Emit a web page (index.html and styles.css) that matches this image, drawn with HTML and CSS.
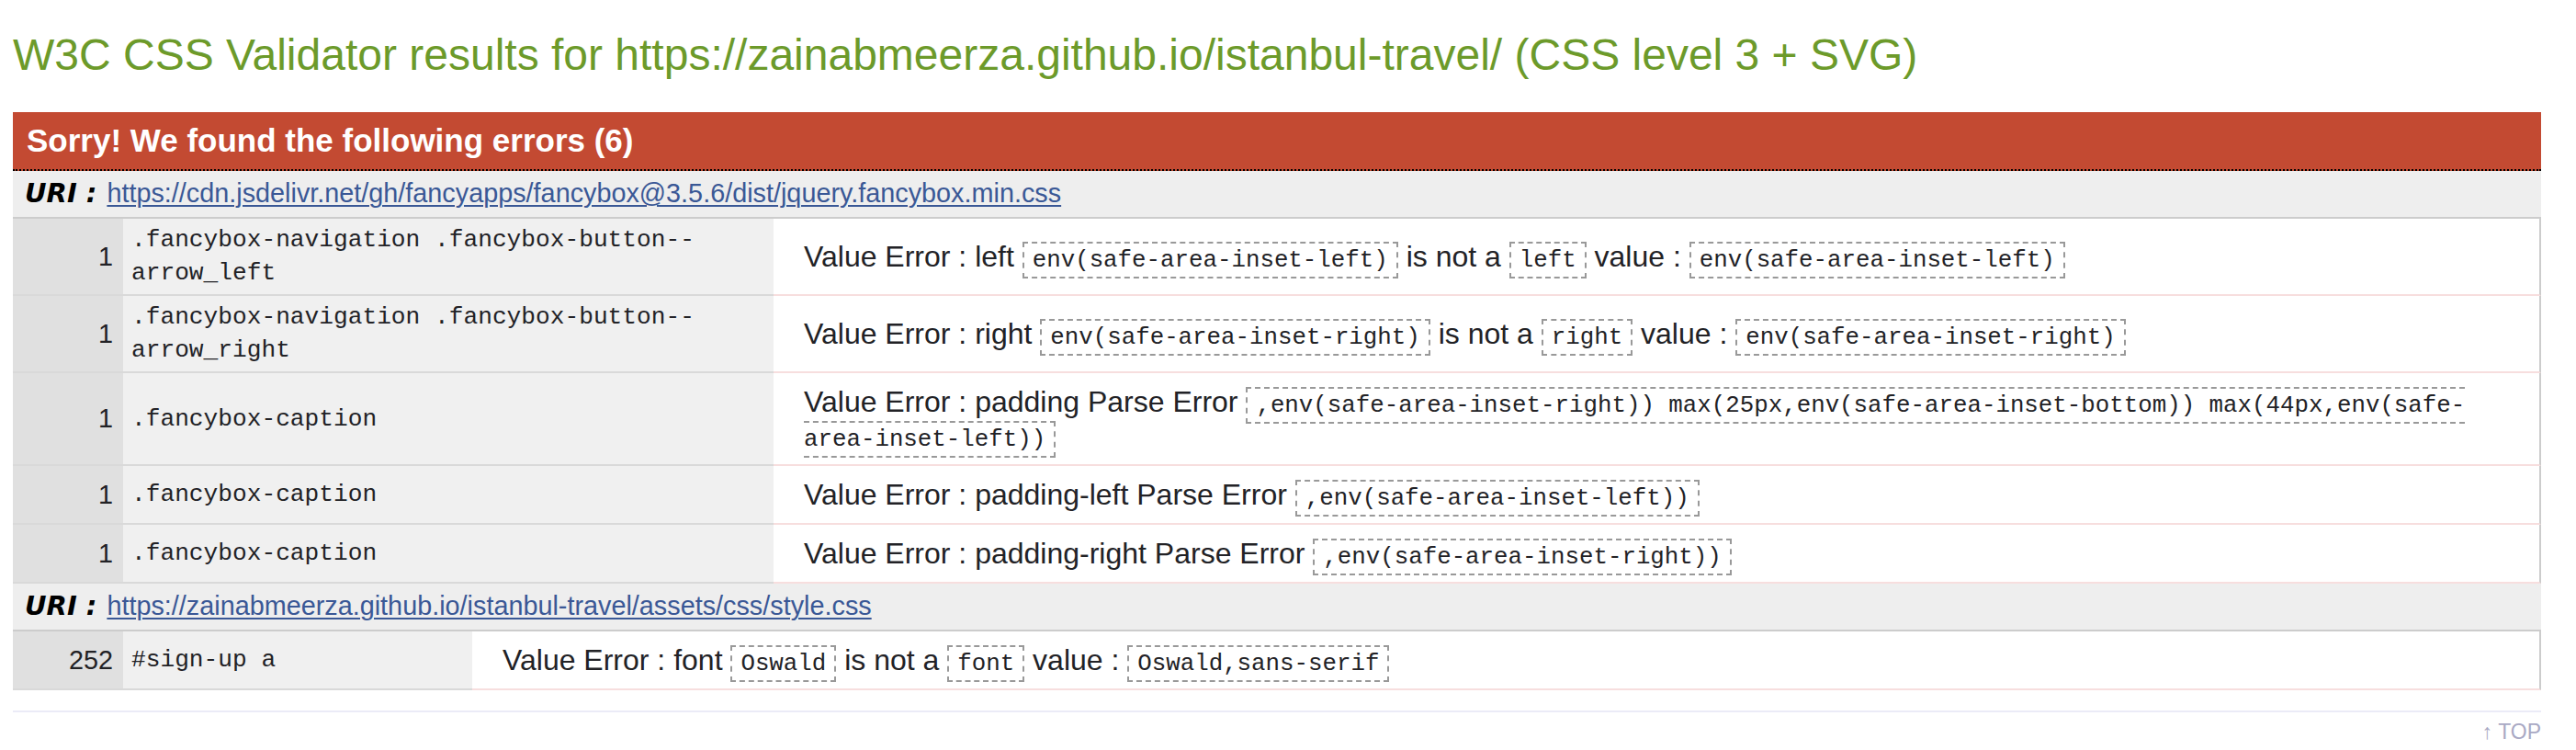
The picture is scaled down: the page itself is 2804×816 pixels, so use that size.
FILE: index.html
```html
<!DOCTYPE html>
<html lang="en">
<head>
<meta charset="utf-8">
<title>W3C CSS Validator results</title>
<link rel="stylesheet" href="styles.css">
</head>
<body>
<div class="page">
  <h2 class="title">W3C CSS Validator results for https://zainabmeerza.github.io/istanbul-travel/ (CSS level 3 + SVG)</h2>

  <div class="errors">
    <h3 class="errors-head">Sorry! We found the following errors (6)</h3>

    <div class="uri-bar"><span class="uri-label">URI :</span> <a class="uri-link" href="#">https://cdn.jsdelivr.net/gh/fancyapps/fancybox@3.5.6/dist/jquery.fancybox.min.css</a></div>
    <table class="err-table">
      <colgroup><col class="c-num"><col class="c-sel-wide"><col></colgroup>
      <tr>
        <td class="num">1</td>
        <td class="sel">.fancybox-navigation .fancybox-button--arrow_left</td>
        <td class="msg">Value Error : left <span class="code">env(safe-area-inset-left)</span> is not a <span class="code">left</span> value : <span class="code">env(safe-area-inset-left)</span></td>
      </tr>
      <tr>
        <td class="num">1</td>
        <td class="sel">.fancybox-navigation .fancybox-button--arrow_right</td>
        <td class="msg">Value Error : right <span class="code">env(safe-area-inset-right)</span> is not a <span class="code">right</span> value : <span class="code">env(safe-area-inset-right)</span></td>
      </tr>
      <tr>
        <td class="num">1</td>
        <td class="sel">.fancybox-caption</td>
        <td class="msg">Value Error : padding Parse Error <span class="code">,env(safe-area-inset-right)) max(25px,env(safe-area-inset-bottom)) max(44px,env(safe-area-inset-left))</span></td>
      </tr>
      <tr>
        <td class="num">1</td>
        <td class="sel">.fancybox-caption</td>
        <td class="msg">Value Error : padding-left Parse Error <span class="code">,env(safe-area-inset-left))</span></td>
      </tr>
      <tr>
        <td class="num">1</td>
        <td class="sel">.fancybox-caption</td>
        <td class="msg">Value Error : padding-right Parse Error <span class="code">,env(safe-area-inset-right))</span></td>
      </tr>
    </table>

    <div class="uri-bar"><span class="uri-label">URI :</span> <a class="uri-link" href="#">https://zainabmeerza.github.io/istanbul-travel/assets/css/style.css</a></div>
    <table class="err-table">
      <colgroup><col class="c-num"><col class="c-sel-narrow"><col></colgroup>
      <tr>
        <td class="num">252</td>
        <td class="sel">#sign-up a</td>
        <td class="msg">Value Error : font <span class="code">Oswald</span> is not a <span class="code">font</span> value : <span class="code">Oswald,sans-serif</span></td>
      </tr>
    </table>
  </div>

  <div class="footer-rule"></div>
  <div class="top-link">↑ TOP</div>
</div>
</body>
</html>
```

FILE: styles.css
```css
html, body {
  margin: 0;
  padding: 0;
  background: #ffffff;
}

.page {
  padding: 0 38px 0 14px;
  font-family: "Liberation Sans", Arial, sans-serif;
  color: #222226;
}

.title {
  margin: 33px 0 35px 0;
  font-size: 48px;
  line-height: 54px;
  font-weight: normal;
  color: #6c9a2a;
  white-space: nowrap;
}

.errors-head {
  margin: 0;
  padding: 11px 15px 12px 15px;
  background: #c34a32;
  color: #ffffff;
  font-size: 35px;
  line-height: 39px;
  font-weight: bold;
  border-bottom: 2px dotted #000000;
}

.uri-bar {
  background: #eeeeee;
  padding: 8px 13px 10px 13px;
  line-height: 32px;
  font-size: 28.8px;
  border-bottom: 2px solid #cccccc;
}

.uri-label {
  font-family: "DejaVu Sans", Verdana, sans-serif;
  font-weight: bold;
  font-style: italic;
  font-size: 29px;
  margin-right: 3px;
  color: #000000;
}

.uri-link {
  color: #3a5896;
  text-decoration: underline;
  text-decoration-thickness: 2px;
  text-underline-offset: 3px;
}

.err-table {
  width: 100%;
  table-layout: fixed;
  border-collapse: separate;
  border-spacing: 0;
}

.c-num { width: 120px; }
.c-sel-wide { width: 708px; }
.c-sel-narrow { width: 380px; }

.err-table td {
  vertical-align: middle;
  border-bottom: 2px solid #d9d9d9;
}

.num {
  background: #e0e0e0;
  text-align: right;
  padding: 0 11px 0 0;
  font-size: 28.8px;
}

.sel {
  background: #f0f0f0;
  font-family: "Liberation Mono", "Courier New", monospace;
  font-size: 26.2px;
  line-height: 36px;
  padding: 5px 9px;
}

.err-table td.msg {
  background: #ffffff;
  font-size: 32px;
  padding: 12.5px 16px 12.5px 33px;
  border-bottom-color: #f7dede;
  border-right: 2px solid #cccccc;
}

.code {
  font-family: "Liberation Mono", "Courier New", monospace;
  font-size: 25.8px;
  border: 2px dashed #999999;
  padding: 3.5px 9px;
}

.footer-rule {
  margin-top: 22px;
  height: 2px;
  background: #ebebf7;
}

.top-link {
  text-align: right;
  font-size: 23px;
  line-height: 26px;
  margin-top: 8px;
  color: #a9a9c4;
}
```
